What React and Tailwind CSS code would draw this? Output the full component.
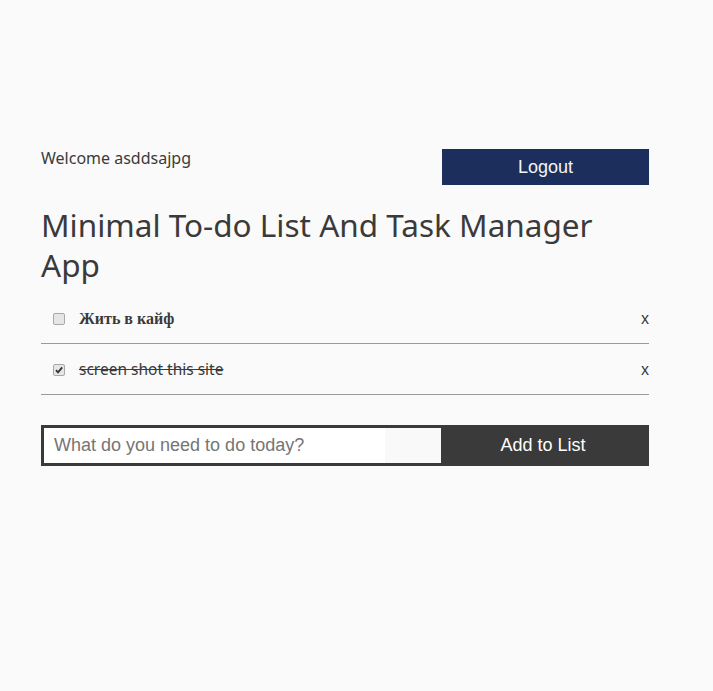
import React, { useState } from 'react'

const App = () => {
  const [todos, setTodos] = useState([
    { id: 1, text: 'Жить в кайф', done: false },
    { id: 2, text: 'screen shot this site', done: true },
  ])

  const toggle = (id) =>
    setTodos(todos.map((t) => (t.id === id ? { ...t, done: !t.done } : t)))

  return (
    <div className="min-h-[691px] bg-[#fafafa] text-[#3a3a3a] font-['Noto_Sans','Open_Sans',sans-serif]">
      <div className="ml-[41px] w-[608px] pt-[149px]">
        {/* header */}
        <div className="flex justify-between items-start">
          <p className="text-[16px] leading-5 -mt-[1px]">Welcome asddsajpg</p>
          <button
            type="button"
            className="w-[207px] h-[36px] bg-[#1c2f5c] text-[#f4f4f4] text-[18px] font-['Liberation_Sans',Arial,sans-serif]"
          >
            Logout
          </button>
        </div>
        <h1 className="text-[31.5px] leading-[40px] mt-[20px]">
          Minimal To-do List And Task Manager App
        </h1>

        {/* todo list */}
        <ul className="mt-[8px]">
          {todos.map((t) => (
            <li key={t.id} className="flex items-center h-[51px] pt-[1px] border-b border-[#9a9a9a]">
              <label className="ml-[12px] relative w-[12px] h-[12px]">
                <input
                  type="checkbox"
                  checked={t.done}
                  onChange={() => toggle(t.id)}
                  className="appearance-none block w-[12px] h-[12px] rounded-[2px] border border-[#a8a8a8] bg-[#e6e6e6]"
                />
                {t.done && (
                  <svg viewBox="0 0 12 12" className="absolute inset-0 w-[12px] h-[12px] pointer-events-none">
                    <path d="M3 6.2 L5 8.3 L9.2 3.4" fill="none" stroke="#333" strokeWidth="1.8" />
                  </svg>
                )}
              </label>
              <span
                className={
                  t.done
                    ? 'ml-[14px] text-[15.5px] line-through'
                    : "ml-[14px] text-[16px] font-bold font-['Liberation_Serif',serif]"
                }
              >
                {t.text}
              </span>
              <span className="ml-auto text-[16px] font-['Liberation_Sans',Arial,sans-serif]">x</span>
            </li>
          ))}
        </ul>

        {/* add form */}
        <form className="flex mt-[30px] h-[41px]">
          <div className="w-[400px] border-[3px] border-r-0 border-[#3a3a3a] flex bg-[#f9f9f9]">
            <input
              type="text"
              placeholder="What do you need to do today?"
              className="w-[341px] h-full bg-white px-[10px] text-[18px] outline-none placeholder:text-[#757575] font-['Liberation_Sans',Arial,sans-serif]"
            />
          </div>
          <button
            type="button"
            className="flex-1 bg-[#3a3a3a] text-white text-[18px] pr-[4px] font-['Liberation_Sans',Arial,sans-serif]"
          >
            Add to List
          </button>
        </form>
      </div>
    </div>
  )
}

export default App
